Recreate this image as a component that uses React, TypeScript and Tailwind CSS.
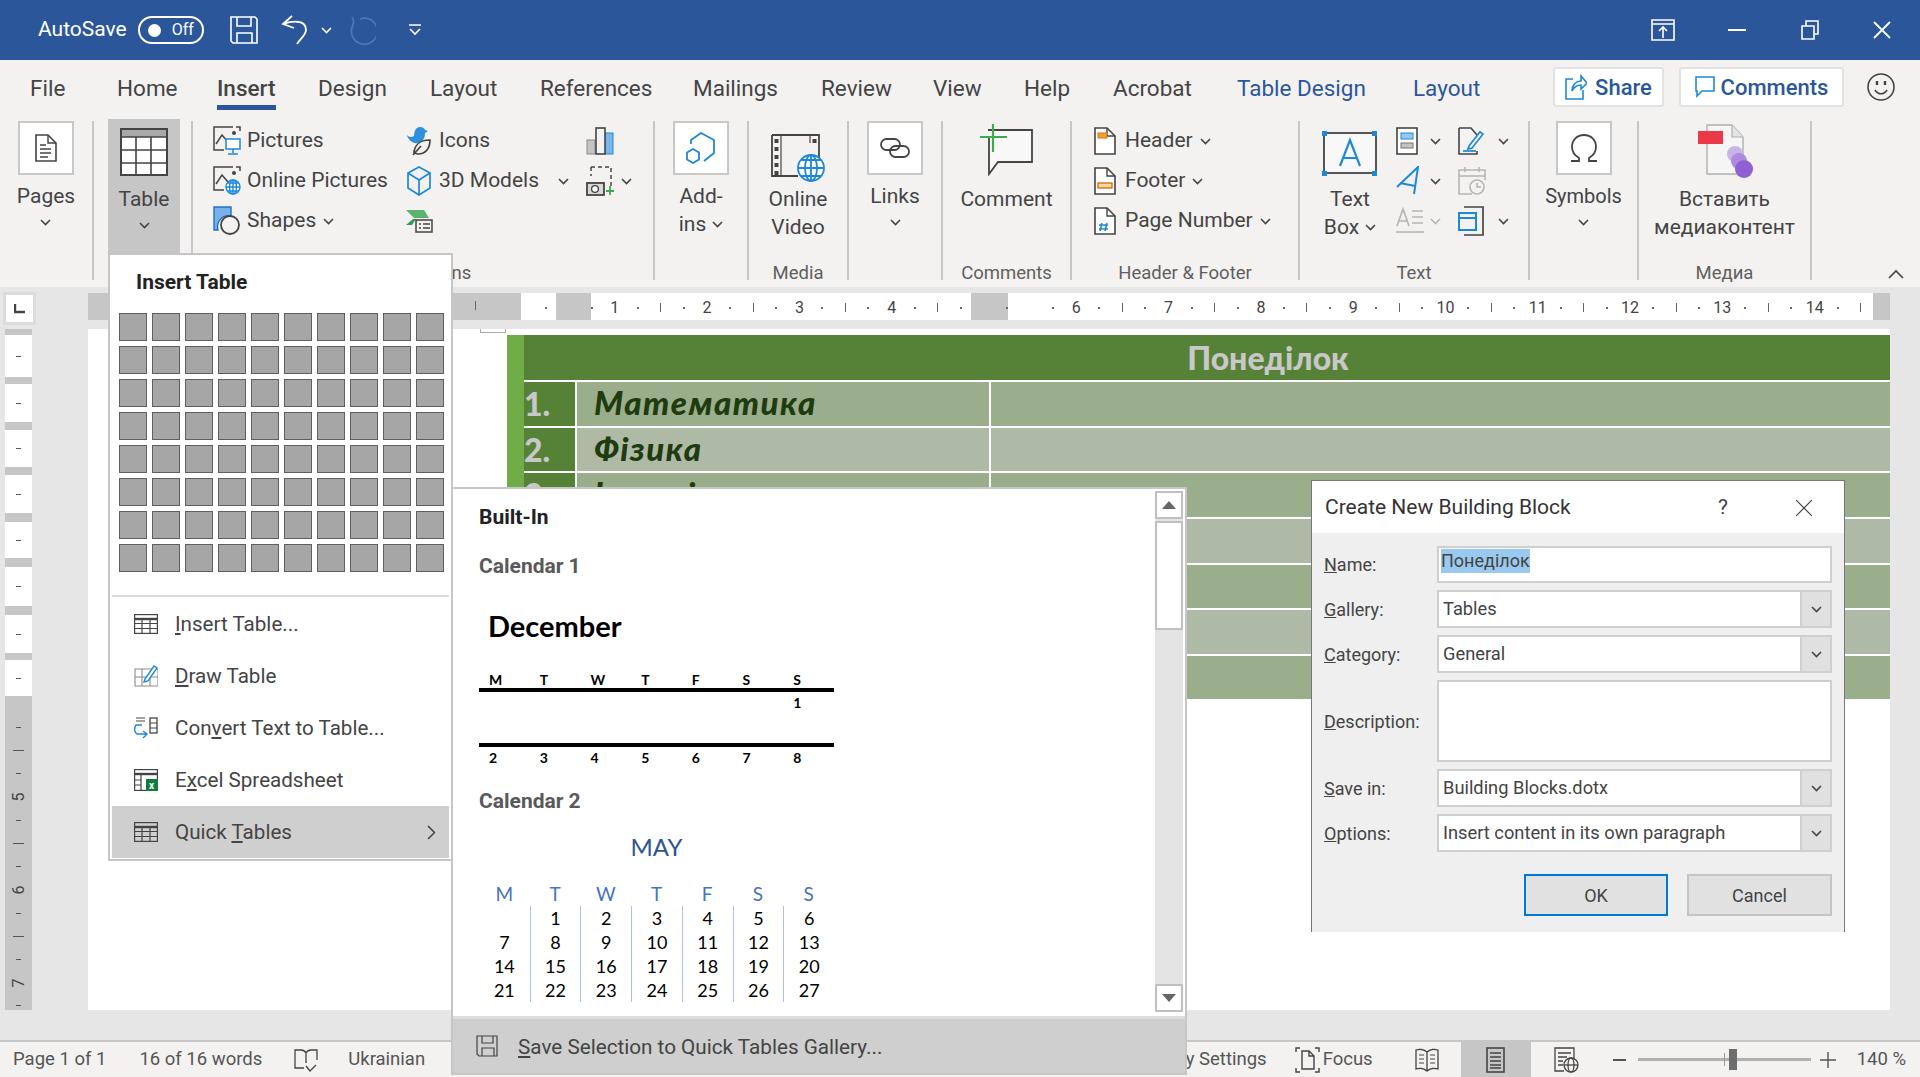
import type { ReactNode } from 'react'

const ink = '#444444'
const blue = '#1e88d8'

function Chev({ className = '' }: { className?: string }) {
  return (
    <svg width="11" height="7" viewBox="0 0 11 7" className={`shrink-0 ${className}`}>
      <path d="M1 1l4.5 4.5L10 1" fill="none" stroke={ink} strokeWidth="1.6" />
    </svg>
  )
}

function SaveIcon() {
  return (
    <svg width="28" height="28" viewBox="0 0 28 28" fill="none" stroke="#fff" strokeWidth="1.6">
      <path d="M1 1h24l2 2v24H3l-2-2z" />
      <path d="M7 1v9h14V1M7 27V17h15v10" />
    </svg>
  )
}

function UndoIcon() {
  return (
    <svg width="28" height="30" viewBox="0 0 28 30" fill="none" stroke="#fff" strokeWidth="1.8">
      <path d="M11 1L2 9l11 4M2 9c6-2 23-6 23 6 0 5-6 9-9 14" />
    </svg>
  )
}

function RedoIcon() {
  return (
    <svg width="30" height="30" viewBox="0 0 30 30" fill="none" stroke="#4f76b0" strokeWidth="1.8">
      <path d="M6 2c2 3 2 5 1 8a13 13 0 1 0 7-6" />
    </svg>
  )
}

function CustomizeIcon() {
  return (
    <svg width="12" height="12" viewBox="0 0 12 12" fill="none" stroke="#fff" strokeWidth="1.6">
      <path d="M0 1h12M1 5l5 5 5-5" />
    </svg>
  )
}

function PresentIcon() {
  return (
    <svg width="24" height="22" viewBox="0 0 24 22" fill="none" stroke="#fff" strokeWidth="1.6">
      <path d="M1 1h22v20H1zM1 5h22M12 19V9M8 12l4-4 4 4" />
    </svg>
  )
}

function RestoreIcon() {
  return (
    <svg width="18" height="20" viewBox="0 0 18 20" fill="none" stroke="#fff" strokeWidth="1.6">
      <path d="M1 6h12v13H1zM5 6V1h12v13h-4" />
    </svg>
  )
}

function DocIcon({ children, w = 22, h = 28 }: { children?: ReactNode; w?: number; h?: number }) {
  return (
    <svg width={w} height={h} viewBox="0 0 22 28" fill="none">
      <path d="M1 1h12l8 8v18H1z" fill="#fff" stroke={ink} strokeWidth="1.6" />
      <path d="M13 1v8h8" stroke={ink} strokeWidth="1.4" />
      {children}
    </svg>
  )
}

function BigTableIcon() {
  return (
    <svg width="48" height="48" viewBox="0 0 48 48">
      <rect x="1" y="1" width="46" height="46" fill="#fff" stroke={ink} strokeWidth="2" />
      <rect x="2" y="2" width="44" height="7" fill="#a9a9a9" />
      <path d="M1 9h46M1 22h46M1 35h46M16 9v38M31 9v38" stroke={ink} strokeWidth="1.6" />
    </svg>
  )
}

function PicturesIcon({ online }: { online?: boolean }) {
  return (
    <svg width="28" height="30" viewBox="0 0 28 30" fill="none">
      <path d="M20 1H1v23h10" stroke={ink} strokeWidth="1.5" />
      <path d="M23 1h4v4" stroke={ink} strokeWidth="1.5" />
      <path d="M3 18l6-9 6 7" stroke={ink} strokeWidth="1.5" />
      <circle cx="21" cy="7" r="2" fill={ink} />
      {online ? (
        <g stroke={blue} strokeWidth="1.4">
          <circle cx="20" cy="21" r="7" fill="#fff" />
          <path d="M13 21h14M20 14v14M15 17h10M15 25h10" />
          <ellipse cx="20" cy="21" rx="3.5" ry="7" />
        </g>
      ) : (
        <g stroke={blue} strokeWidth="1.5">
          <rect x="13" y="13" width="14" height="10" fill="#fff" />
          <path d="M20 23v4M15 28h10" />
        </g>
      )}
    </svg>
  )
}

function ShapesIcon() {
  return (
    <svg width="28" height="30" viewBox="0 0 28 30">
      <path d="M1 1h17v9a11 11 0 0 0-13 14H1z" fill="#7ab2e8" stroke="#1e73c8" strokeWidth="1.4" />
      <circle cx="17" cy="19" r="9" fill="#f3f2f1" stroke={ink} strokeWidth="1.8" />
    </svg>
  )
}

function IconsIcon() {
  return (
    <svg width="26" height="30" viewBox="0 0 26 30" fill="none">
      <path d="M1 9c3 3 5 2 7 1 0-5 2-9 6-9 3 0 4 1 5 3l3 1-3 2c0 6-3 9-7 10-5 1-10-3-11-8z" fill="#2f8fdc" />
      <path d="M8 28c0-8 5-14 16-14 0 8-4 14-12 14-2 0-3-1-4-2zM7 29l8-9" stroke={ink} strokeWidth="1.7" fill="#f3f2f1" />
    </svg>
  )
}

function ModelsIcon() {
  return (
    <svg width="26" height="30" viewBox="0 0 26 30" fill="none" stroke={blue} strokeWidth="1.7">
      <path d="M13 1l11 6v15l-11 7-11-7V7zM2 7l11 7 11-7M13 14v15" />
    </svg>
  )
}

function SmartIcon() {
  return (
    <svg width="28" height="24" viewBox="0 0 28 24">
      <path d="M1 1h18l5 8H9L1 1z" fill="#5bb36d" />
      <path d="M1 16l7-6h3l-4 6z" fill="#2f9e50" />
      <rect x="11" y="11" width="16" height="12" fill="#f3f2f1" stroke={ink} strokeWidth="1.5" />
      <path d="M14 15h2M18 15h7M14 19h2M18 19h7" stroke={ink} strokeWidth="1.4" />
    </svg>
  )
}

function ChartIcon() {
  return (
    <svg width="28" height="28" viewBox="0 0 28 28">
      <rect x="1" y="13" width="8" height="14" fill="#c4c4c4" stroke="#8a8a8a" />
      <rect x="19" y="6" width="8" height="21" fill="#7ab6ec" stroke={blue} />
      <rect x="10" y="1" width="9" height="26" fill="#f3f2f1" stroke={ink} strokeWidth="1.6" />
    </svg>
  )
}

function ScreenshotIcon() {
  return (
    <svg width="28" height="30" viewBox="0 0 28 30" fill="none">
      <path d="M5 1h20v20M5 1v9" stroke={ink} strokeWidth="1.5" strokeDasharray="4 3" />
      <rect x="1" y="17" width="17" height="12" stroke={ink} strokeWidth="1.8" fill="#d9d9d9" />
      <circle cx="9" cy="23" r="3.4" fill="#fff" stroke={ink} strokeWidth="1.4" />
      <path d="M24 20v9M20 25h8" stroke="#3dab4c" strokeWidth="1.8" />
    </svg>
  )
}

function AddinsIcon() {
  return (
    <svg width="30" height="32" viewBox="0 0 30 32" fill="none" stroke={blue} strokeWidth="1.8">
      <path d="M5 12V8l10-7 13 7v13l-10 8" />
      <path d="M7 17l6 3.5v7L7 31l-6-3.5v-7z" />
    </svg>
  )
}

function LinksIcon() {
  return (
    <svg width="30" height="20" viewBox="0 0 30 20" fill="none" stroke={ink} strokeWidth="1.8">
      <rect x="1" y="1" width="19" height="11" rx="5.5" />
      <rect x="10" y="8" width="19" height="11" rx="5.5" />
    </svg>
  )
}

function VideoIcon() {
  return (
    <svg width="54" height="48" viewBox="0 0 54 48" fill="none">
      <path d="M1 1h47v27M1 1v41h26" stroke={ink} strokeWidth="1.8" />
      <path d="M10 1v41M39 1v8" stroke={ink} strokeWidth="1.2" />
      {[5, 13, 21, 29, 37].map((y) => (
        <rect key={y} x="3.5" y={y} width="4" height="4" fill={ink} />
      ))}
      <rect x="41.5" y="5" width="4" height="4" fill={ink} />
      <g stroke={blue} strokeWidth="1.8">
        <circle cx="40" cy="34" r="13" fill="#fff" />
        <ellipse cx="40" cy="34" rx="6" ry="13" />
        <path d="M27 34h26M40 21v26M30 26h20M30 42h20" />
      </g>
    </svg>
  )
}

function CommentIcon() {
  return (
    <svg width="54" height="52" viewBox="0 0 54 52" fill="none">
      <path d="M8 6h44v32H18l-9 12v-12h0V14" fill="#f8f8f8" stroke={ink} strokeWidth="1.8" />
      <path d="M13 0v28M0 13h27" stroke="#3dab4c" strokeWidth="2.2" />
    </svg>
  )
}

function TextBoxIcon() {
  return (
    <svg width="56" height="46" viewBox="0 0 56 46">
      <rect x="2" y="3" width="52" height="40" fill="#f8f8f8" stroke={ink} strokeWidth="1.8" />
      <path d="M18 36l10-26 10 26M21 28h14" fill="none" stroke={blue} strokeWidth="2.2" />
      {[[0, 1], [50, 1], [0, 41], [50, 41]].map(([x, y]) => (
        <rect key={`${x}-${y}`} x={x} y={y} width="5" height="5" fill={blue} />
      ))}
    </svg>
  )
}

function QuickPartsIcon() {
  return (
    <svg width="22" height="28" viewBox="0 0 22 28" fill="none">
      <rect x="1" y="1" width="20" height="26" fill="#fff" stroke={ink} strokeWidth="1.6" />
      <rect x="5" y="6" width="12" height="6" fill="#9cc7ec" stroke={blue} />
      <rect x="5" y="16" width="12" height="5" fill="#c4c4c4" stroke="#777" />
    </svg>
  )
}

function WordArtIcon() {
  return (
    <svg width="24" height="30" viewBox="0 0 24 30" fill="none" stroke={blue} strokeWidth="2">
      <path d="M1 21L22 1l-4 27M4 17l15 3" />
    </svg>
  )
}

function DropCapIcon() {
  return (
    <svg width="28" height="28" viewBox="0 0 28 28" fill="none" stroke="#b5b5b5" strokeWidth="1.7">
      <path d="M1 19l6-17 6 17M3 14h8M16 4h11M16 10h11M16 16h11M0 25h28" />
    </svg>
  )
}

function SignatureIcon() {
  return (
    <svg width="26" height="28" viewBox="0 0 26 28" fill="none">
      <path d="M1 1h12l6 7v6M1 1v26h18v-3" stroke={ink} strokeWidth="1.6" />
      <path d="M11 19l11-14 3 2-11 14-4 1z" fill="#fff" stroke={blue} strokeWidth="1.7" />
      <path d="M5 24h13" stroke={blue} strokeWidth="1.7" />
    </svg>
  )
}

function DateIcon() {
  return (
    <svg width="28" height="30" viewBox="0 0 28 30" fill="none" stroke="#b5b5b5" strokeWidth="1.6">
      <path d="M14 28H1V4h26v10M1 10h26M7 1v5M21 1v5" />
      <circle cx="19" cy="21" r="7" fill="#f3f2f1" />
      <path d="M19 17v4h4" />
    </svg>
  )
}

function ObjectIcon() {
  return (
    <svg width="26" height="30" viewBox="0 0 26 30" fill="none">
      <path d="M6 1h19v28H6" stroke={ink} strokeWidth="1.7" />
      <rect x="1" y="7" width="17" height="17" fill="#f3f2f1" stroke={blue} strokeWidth="2" />
      <path d="M1 12h17" stroke={blue} strokeWidth="2" />
    </svg>
  )
}

function OmegaIcon() {
  return (
    <svg width="28" height="28" viewBox="0 0 28 28" fill="none" stroke={ink} strokeWidth="1.8">
      <path d="M1 27h8v-3C4 21 2 17 2 13 2 6 7 1 14 1s12 5 12 12c0 4-2 8-7 11v3h8" />
    </svg>
  )
}

function MediaIcon() {
  return (
    <svg width="58" height="54" viewBox="0 0 58 54">
      <path d="M9 1h25l11 12v37H9z" fill="#f5f5f5" stroke="#b0b0b0" strokeWidth="1.4" />
      <path d="M34 1v12h11" fill="#e4e4e4" stroke="#b0b0b0" strokeWidth="1.2" />
      <rect x="0" y="7" width="25" height="13" fill="#ea3a48" />
      <circle cx="37" cy="30" r="8" fill="#c8b4e6" />
      <circle cx="41" cy="37" r="8" fill="#ad8ae0" />
      <circle cx="46" cy="45" r="9" fill="#8f5fd6" />
    </svg>
  )
}

function GridIcon() {
  return (
    <svg width="24" height="20" viewBox="0 0 24 20" fill="none" stroke={ink} strokeWidth="1.2">
      <rect x="0.6" y="0.6" width="22.8" height="18.8" />
      <path d="M0 5h24" strokeWidth="2.4" />
      <path d="M0 9.5h24M0 14.5h24M8 5v15M16 5v15" />
    </svg>
  )
}

function DrawTableIcon() {
  return (
    <svg width="24" height="22" viewBox="0 0 24 22" fill="none" stroke="#8a8a8a" strokeWidth="1.1">
      <path d="M1 4h23v17H1zM1 12h23M8 4v17M16 12v9" />
      <path d="M11 14l9-13 3 2-9 13-4 1z" fill="#fff" stroke={blue} strokeWidth="1.4" />
    </svg>
  )
}

function ConvertIcon() {
  return (
    <svg width="24" height="24" viewBox="0 0 24 24" fill="none">
      <path d="M2 2h9M2 5h9" stroke={ink} strokeWidth="1.2" />
      <rect x="16" y="2" width="7" height="15" stroke={ink} strokeWidth="1.3" />
      <path d="M16 7h7M16 12h7" stroke={ink} strokeWidth="1.1" />
      <path d="M8 9H2C0 12 0 16 3 18h10M9 15l4 3-4 4" stroke={blue} strokeWidth="1.4" />
    </svg>
  )
}

function ExcelIcon() {
  return (
    <svg width="24" height="22" viewBox="0 0 24 22">
      <g fill="none" stroke={ink} strokeWidth="1.2">
        <rect x="0.6" y="0.6" width="22.8" height="20.8" />
        <path d="M0 5h24" strokeWidth="2.4" />
        <path d="M7 5v17M0 11h7M0 16h7" />
      </g>
      <rect x="12" y="10" width="12" height="12" fill="#107c41" />
      <text x="15" y="20" fontSize="10" fontWeight="700" fill="#fff" fontFamily="Roboto, sans-serif">x</text>
    </svg>
  )
}

function FloppyIcon() {
  return (
    <svg width="23" height="22" viewBox="0 0 23 22" fill="none" stroke={ink} strokeWidth="1.2">
      <path d="M1 1h20v20H3l-2-2z" />
      <path d="M6 1v7h11V1M6 21v-8h12v8" />
    </svg>
  )
}

function BookCheckIcon() {
  return (
    <svg width="24" height="24" viewBox="0 0 24 24" fill="none" stroke={ink} strokeWidth="1.3">
      <path d="M10 20H1V2h6c2 0 4 1 5 3 1-2 3-3 5-3h6v10M12 5v10" />
      <path d="M12 18l4 5 6-6" />
    </svg>
  )
}

function FocusIcon() {
  return (
    <svg width="25" height="26" viewBox="0 0 25 26" fill="none" stroke={ink} strokeWidth="1.4">
      <path d="M1 5V1h4M20 1h4v4M1 21v4h4M24 21v4h-4" />
      <path d="M7 4h7l5 5v13H7zM14 4v5h5" />
    </svg>
  )
}

function ReadIcon() {
  return (
    <svg width="24" height="24" viewBox="0 0 24 24" fill="none" stroke={ink} strokeWidth="1.3">
      <path d="M12 4C9 1 4 1 1 2v19c3-1 8-1 11 2 3-3 8-3 11-2V2c-3-1-8-1-11 2zM12 4v19" />
      <path d="M4 7h5M4 11h5M4 15h5M15 7h5M15 11h5M15 15h5" strokeWidth="1.2" />
    </svg>
  )
}

function PrintIcon() {
  return (
    <svg width="19" height="26" viewBox="0 0 19 26" fill="none" stroke={ink}>
      <rect x="1" y="1" width="17" height="24" strokeWidth="1.6" />
      <path d="M4 6h11M4 10h11M4 14h11M4 18h11M4 21h11" strokeWidth="1.4" />
    </svg>
  )
}

function WebIcon() {
  return (
    <svg width="25" height="26" viewBox="0 0 25 26" fill="none" stroke={ink} strokeWidth="1.3">
      <path d="M10 24H1V1h19v10M4 6h13M4 10h9M4 14h5M4 18h5" />
      <circle cx="17" cy="18" r="7" fill="#f3f2f1" />
      <ellipse cx="17" cy="18" rx="3" ry="7" />
      <path d="M10 18h14" />
    </svg>
  )
}

function BoxIcon({ children }: { children: ReactNode }) {
  return (
    <div className="flex h-[54px] w-[56px] items-center justify-center border-2 border-[#c8c8c8] bg-white">
      {children}
    </div>
  )
}

function Group({ className, label, children }: { className: string; label?: string; children?: ReactNode }) {
  return (
    <div className={`mt-[2px] flex h-[159px] shrink-0 flex-col border-r-2 border-[#c6c6c6] ${className}`}>
      <div className="flex min-h-0 flex-1">{children}</div>
      {label && <div className="-mb-[4px] h-[22px] text-center text-[18.5px] leading-[22px] text-[#5f5f5f]">{label}</div>}
    </div>
  )
}

function BoxButton({ icon, lines, chevInline, small }: { icon: ReactNode; lines: string[]; chevInline?: boolean; small?: boolean }) {
  return (
    <div className="flex w-full flex-col items-center">
      <BoxIcon>{icon}</BoxIcon>
      <div className={`mt-[7px] flex flex-col items-center leading-[28px] ${small ? 'text-[20px]' : 'text-[21px]'}`}>
        {lines.map((l, i) => (
          <div key={l} className="flex items-center gap-[6px]">
            {l}
            {chevInline && i === lines.length - 1 && <Chev />}
          </div>
        ))}
        {!chevInline && <Chev className="mt-[9px]" />}
      </div>
    </div>
  )
}

function TallButton({ icon, lines, chev }: { icon: ReactNode; lines: string[]; chev?: boolean }) {
  return (
    <div className="flex flex-col items-center">
      <div className="flex h-[64px] items-start justify-center pt-[3px]">{icon}</div>
      <div className="flex flex-col items-center text-[21px] leading-[28px]">
        {lines.map((l, i) => (
          <div key={l} className="flex items-center gap-[6px] whitespace-nowrap">
            {l}
            {chev && i === lines.length - 1 && <Chev />}
          </div>
        ))}
      </div>
    </div>
  )
}

function SmallRow({ icon, text, chev }: { icon: ReactNode; text?: string; chev?: boolean }) {
  return (
    <div className="flex h-[40px] items-center whitespace-nowrap text-[21px]">
      <div className="flex w-[28px] shrink-0 justify-center">{icon}</div>
      {text && <span className="ml-[6px]">{text}</span>}
      {chev && <Chev className="ml-[7px]" />}
    </div>
  )
}

const tabs = [
  { t: 'File', c: 'w-[87px]' },
  { t: 'Home', c: 'w-[100px]' },
  { t: 'Insert', c: 'w-[101px] font-medium' },
  { t: 'Design', c: 'w-[112px]' },
  { t: 'Layout', c: 'w-[110px]' },
  { t: 'References', c: 'w-[153px]' },
  { t: 'Mailings', c: 'w-[128px]' },
  { t: 'Review', c: 'w-[112px]' },
  { t: 'View', c: 'w-[91px]' },
  { t: 'Help', c: 'w-[89px]' },
  { t: 'Acrobat', c: 'w-[124px]' },
  { t: 'Table Design', c: 'w-[176px] text-[#2b579a]' },
  { t: 'Layout', c: 'w-[90px] text-[#2b579a]' },
]

function TitleBar() {
  return (
    <div className="flex h-[60px] shrink-0 items-center bg-[#2b579a] text-white">
      <span className="ml-[38px] text-[21px]">AutoSave</span>
      <div className="ml-[11px] flex h-[28px] w-[66px] items-center rounded-full border-2 border-white pl-[8px]">
        <div className="h-[13px] w-[13px] rounded-full bg-white" />
        <span className="ml-[11px] text-[16px]">Off</span>
      </div>
      <div className="ml-[26px] flex"><SaveIcon /></div>
      <div className="ml-[23px] flex"><UndoIcon /></div>
      <Chev className="ml-[12px] [&_path]:stroke-white" />
      <div className="ml-[14px] flex"><RedoIcon /></div>
      <div className="ml-[33px] flex"><CustomizeIcon /></div>
      <div className="ml-auto flex items-center">
        <PresentIcon />
        <div className="ml-[53px] h-[2px] w-[18px] bg-white" />
        <div className="ml-[55px] flex"><RestoreIcon /></div>
        <svg className="ml-[54px] mr-[29px]" width="18" height="18" viewBox="0 0 18 18" stroke="#fff" strokeWidth="1.8">
          <path d="M1 1l16 16M17 1L1 17" />
        </svg>
      </div>
    </div>
  )
}

function TabRow() {
  return (
    <div className="flex h-[59px] shrink-0 items-start bg-[#f3f2f1] pl-[30px] text-[22.5px] leading-[30px] text-[#444]">
      <div className="flex pt-[13px]">
        {tabs.map((x, i) => (
          <div key={i} className={x.c}>
            <span className={x.t === 'Insert' ? 'inline-block border-b-[5px] border-[#2b579a] pb-[2px]' : ''}>{x.t}</span>
          </div>
        ))}
      </div>
      <div className="ml-auto flex items-center pt-[7px]">
        <div className="flex h-[40px] w-[111px] items-center justify-center gap-[8px] rounded-[3px] border-2 border-[#e2e2e2] bg-white text-[22px] font-medium text-[#2b579a]">
          <svg width="22" height="26" viewBox="0 0 22 26" fill="none" stroke={blue} strokeWidth="1.6">
            <path d="M8 5H1v20h17v-9M7 17c0-6 4-10 9-10V2l6 7-6 6v-4c-4 0-7 2-9 6z" />
          </svg>
          <span className="pt-[2px]">Share</span>
        </div>
        <div className="ml-[15px] flex h-[40px] w-[165px] items-center justify-center gap-[6px] rounded-[3px] border-2 border-[#e2e2e2] bg-white text-[22px] font-medium text-[#2b579a]">
          <svg width="20" height="22" viewBox="0 0 20 22" fill="none" stroke={blue} strokeWidth="1.6">
            <path d="M1 1h18v14H7l-5 5v-5H1z" />
          </svg>
          <span className="pt-[2px]">Comments</span>
        </div>
        <svg className="ml-[23px] mr-[25px]" width="28" height="28" viewBox="0 0 28 28" fill="none" stroke={ink} strokeWidth="1.6">
          <circle cx="14" cy="14" r="13" />
          <path d="M8 17c3 5 9 5 12 0" />
          <path d="M10 8v4M18 8v4" strokeWidth="2.4" />
        </svg>
      </div>
    </div>
  )
}

function Ribbon() {
  return (
    <div className="flex h-[168px] shrink-0 items-start bg-[#f3f2f1] text-[#444]">
      <Group className="w-[94px]">
        <BoxButton icon={<DocIcon><path d="M5 11h6M5 15h11M5 19h11M5 23h8" stroke={ink} strokeWidth="1.3" /></DocIcon>} lines={['Pages']} />
      </Group>
      <Group className="w-[99px]">
        <div className="ml-[14px] -mt-[2px] flex h-[134px] w-[72px] flex-col items-center bg-[#c6c6c6] pt-[9px]">
          <BigTableIcon />
          <span className="mt-[9px] text-[21px] leading-[28px]">Table</span>
          <Chev className="mt-[9px]" />
        </div>
      </Group>
      <Group className="w-[462px]" label="Illustrations">
        <div className="w-[192px] pl-[20px]">
          <SmallRow icon={<PicturesIcon />} text="Pictures" />
          <SmallRow icon={<PicturesIcon online />} text="Online Pictures" />
          <SmallRow icon={<ShapesIcon />} text="Shapes" chev />
        </div>
        <div className="w-[180px] pl-[20px]">
          <SmallRow icon={<IconsIcon />} text="Icons" />
          <div className="flex items-center">
            <SmallRow icon={<ModelsIcon />} text="3D Models" />
            <Chev className="ml-[19px]" />
          </div>
          <SmallRow icon={<SmartIcon />} />
        </div>
        <div className="pl-[21px]">
          <SmallRow icon={<ChartIcon />} />
          <SmallRow icon={<ScreenshotIcon />} chev />
        </div>
      </Group>
      <Group className="w-[94px]">
        <BoxButton icon={<AddinsIcon />} lines={['Add-', 'ins']} chevInline />
      </Group>
      <Group className="w-[100px]" label="Media">
        <div className="flex w-full justify-center">
          <TallButton icon={<div className="pt-[10px]"><VideoIcon /></div>} lines={['Online', 'Video']} />
        </div>
      </Group>
      <Group className="w-[94px]">
        <BoxButton icon={<LinksIcon />} lines={['Links']} />
      </Group>
      <Group className="w-[129px]" label="Comments">
        <div className="flex w-full justify-center">
          <TallButton icon={<CommentIcon />} lines={['Comment']} />
        </div>
      </Group>
      <Group className="w-[228px]" label="Header & Footer">
        <div className="pl-[19px]">
          <SmallRow icon={<DocIcon><rect x="4" y="6" width="9" height="5" fill="#f0a030" stroke="#d8730a" /></DocIcon>} text="Header" chev />
          <SmallRow icon={<DocIcon><rect x="4" y="16" width="14" height="5" fill="#f8d9a8" stroke="#d8730a" strokeWidth="1.4" /></DocIcon>} text="Footer" chev />
          <SmallRow icon={<DocIcon><path d="M8 16l-2 8M13 16l-2 8M5 18h9M5 22h9" stroke={blue} strokeWidth="1.6" /></DocIcon>} text="Page Number" chev />
        </div>
      </Group>
      <Group className="w-[230px]" label="Text">
        <div className="flex w-[96px] justify-center pl-[4px]">
          <TallButton icon={<div className="pt-[6px]"><TextBoxIcon /></div>} lines={['Text', 'Box']} chev />
        </div>
        <div className="w-[62px]">
          <div className="flex h-[40px] items-center gap-[12px]"><QuickPartsIcon /><Chev /></div>
          <div className="flex h-[40px] items-center gap-[10px]"><WordArtIcon /><Chev /></div>
          <div className="flex h-[40px] items-center gap-[6px]"><DropCapIcon /><Chev className="[&_path]:stroke-[#b5b5b5]" /></div>
        </div>
        <div className="w-[70px]">
          <div className="flex h-[40px] items-center gap-[14px]"><SignatureIcon /><Chev /></div>
          <div className="flex h-[40px] items-center"><DateIcon /></div>
          <div className="flex h-[40px] items-center gap-[14px]"><ObjectIcon /><Chev /></div>
        </div>
      </Group>
      <Group className="w-[109px]">
        <BoxButton icon={<OmegaIcon />} lines={['Symbols']} small />
      </Group>
      <Group className="w-[173px]" label="Медиа">
        <div className="flex w-full justify-center">
          <TallButton icon={<div className="pl-[4px]"><MediaIcon /></div>} lines={['Вставить', 'медиаконтент']} />
        </div>
      </Group>
      <div className="mt-[150px] flex flex-1 justify-end pr-[16px]">
        <svg width="16" height="10" viewBox="0 0 16 10" fill="none" stroke={ink} strokeWidth="1.6">
          <path d="M1 9l7-7 7 7" />
        </svg>
      </div>
    </div>
  )
}

const rulerUnits = Array.from({ length: 16 }, (_, i) => i)

function RulerRow() {
  return (
    <div className="relative flex h-[42px] shrink-0 items-start bg-[#e6e6e6] pt-[5px]">
      <div className="ml-[3px] flex h-[33px] w-[33px] items-center justify-center border-[3px] border-[#dcdcdc] bg-white">
        <svg width="12" height="10" viewBox="0 0 12 10">
          <path d="M1 0v8h10" fill="none" stroke="#444" strokeWidth="2.4" />
        </svg>
      </div>
      <div className="ml-[52px] mt-[1px] flex h-[27px]">
        <div className="w-[433px] bg-[#c6c6c6]" />
        <div className="w-[35px] bg-white" />
        <div className="w-[35px] bg-[#c6c6c6]" />
        <div className="w-[380px] bg-white" />
        <div className="w-[37px] bg-[#c6c6c6]" />
        <div className="w-[865px] bg-white" />
        <div className="w-[17px] bg-[#c6c6c6]" />
      </div>
      <div className="absolute left-[475px] top-[14px] h-[9px] w-px bg-[#666]" />
      <div className="absolute left-[511px] top-[6px] flex h-[27px] w-[1362px] overflow-hidden pt-[2px] text-[16px] text-[#444]">
        {rulerUnits.map((n) => (
          <div key={n} className="flex w-[92.3px] shrink-0 items-center">
            <span className="flex w-[23px] justify-center">{n === 0 || n === 5 ? '' : n}</span>
            <span className="flex w-[23px] justify-center"><i className="block h-[2px] w-[2px] bg-[#666]" /></span>
            <span className="flex w-[23px] justify-center">{n !== 0 && n !== 5 && <i className="block h-[9px] w-px bg-[#666]" />}</span>
            <span className="flex w-[23px] justify-center"><i className="block h-[2px] w-[2px] bg-[#666]" /></span>
          </div>
        ))}
      </div>
    </div>
  )
}

const whiteSegs = [
  'h-[42px] mt-[6px]',
  'h-[38px] mt-[7px]',
  'h-[37px] mt-[8px]',
  'h-[38px] mt-[8px]',
  'h-[36px] mt-[9px]',
  'h-[39px] mt-[9px]',
  'h-[38px] mt-[9px]',
  'h-[36px] mt-[7px]',
]

const lowerTicks = ['s', 'l', 's', '5', 's', 'l', 's', '6', 's', 'l', 's', '7', 's']

function VerticalRuler() {
  return (
    <div className="ml-[5px] flex h-[681px] w-[27px] flex-col overflow-hidden bg-[#c6c6c6]">
      {whiteSegs.map((c) => (
        <div key={c} className={`flex shrink-0 items-center justify-center bg-white ${c}`}>
          <i className="block h-px w-[5px] bg-[#555]" />
        </div>
      ))}
      <div className="flex flex-col pt-[20px] text-[16px] text-[#444]">
        {lowerTicks.map((t, i) => (
          <div key={i} className="flex h-[23.2px] shrink-0 items-center justify-center">
            {t === 's' && <i className="block h-px w-[5px] bg-[#555]" />}
            {t === 'l' && <i className="block h-px w-[11px] bg-[#555]" />}
            {t !== 's' && t !== 'l' && <span className="-rotate-90">{t}</span>}
          </div>
        ))}
      </div>
    </div>
  )
}

const lessons = ['Математика', 'Фізика', 'Історія', '', '', '', '']
const rowHeights = ['h-[46px]', 'h-[45px]', 'h-[46px]', 'h-[46px]', 'h-[45px]', 'h-[46px]', 'h-[45px]']

function DocTable() {
  return (
    <div className="relative flex w-[1383px] bg-[#70ad47]">
      <div className="absolute -top-[6px] left-[-27px] h-[4px] w-[26px] border-x border-b border-[#aaa] bg-white" />
      <div className="w-[17px] shrink-0" />
      <div className="flex flex-1 flex-col [font-family:Lato,sans-serif]">
        <div className="flex h-[45px] items-center justify-center bg-[#568237] pl-[122px] text-[32px] font-black text-[#c8c8c8]">
          Понеділок
        </div>
        {lessons.map((name, i) => (
          <div key={i} className={`flex border-t-2 border-white ${rowHeights[i]} ${i % 2 === 0 ? 'bg-[#9aae8b]' : 'bg-[#aebaa6]'}`}>
            <div className="flex w-[51px] items-center bg-[#568237] text-[32px] font-black text-[#c8c8c8]">
              {i + 1}.
            </div>
            <div className="flex w-[416px] items-center border-x-2 border-white pb-[2px] pl-[17px] text-[33px] font-black italic tracking-[1.5px] text-[#1f3b10]">
              {name}
            </div>
          </div>
        ))}
      </div>
    </div>
  )
}

function StatusBar() {
  return (
    <div className="flex h-[37px] shrink-0 items-center border-t-2 border-[#c6c6c6] bg-[#f3f2f1] text-[18.5px] text-[#555]">
      <span className="ml-[13px]">Page 1 of 1</span>
      <span className="ml-[33px]">16 of 16 words</span>
      <div className="ml-[32px] flex"><BookCheckIcon /></div>
      <span className="ml-[30px]">Ukrainian</span>
      <div className="ml-auto flex h-full items-center">
        <span>Display Settings</span>
        <div className="ml-[28px] flex"><FocusIcon /></div>
        <span className="ml-[3px]">Focus</span>
        <div className="ml-[42px] flex"><ReadIcon /></div>
        <div className="ml-[22px] flex h-full w-[70px] items-center justify-center bg-[#c6c6c6]"><PrintIcon /></div>
        <div className="ml-[23px] flex"><WebIcon /></div>
        <div className="ml-[34px] h-[2px] w-[13px] bg-[#555]" />
        <div className="relative ml-[12px] h-[3px] w-[173px] bg-[#b0b0b0]">
          <div className="absolute -top-[5px] left-[86px] h-[13px] w-px bg-[#999]" />
          <div className="absolute -top-[9px] left-[91px] h-[21px] w-[8px] bg-[#6e6e6e]" />
        </div>
        <svg className="ml-[9px]" width="16" height="16" viewBox="0 0 16 16" stroke="#555" strokeWidth="1.4">
          <path d="M0 8h16M8 0v16" />
        </svg>
        <span className="ml-[21px] mr-[14px]">140 %</span>
      </div>
    </div>
  )
}

const menuItems = [
  { icon: <GridIcon />, text: <><u>I</u>nsert Table...</> },
  { icon: <DrawTableIcon />, text: <><u>D</u>raw Table</> },
  { icon: <ConvertIcon />, text: <>Con<u>v</u>ert Text to Table...</> },
  { icon: <ExcelIcon />, text: <>E<u>x</u>cel Spreadsheet</> },
]

function InsertTableMenu() {
  const cells = Array.from({ length: 80 }, (_, i) => i)
  return (
    <div className="absolute left-[108px] top-[253px] z-10 h-[608px] w-[345px] border-2 border-[#c6c6c6] bg-white text-[#444]">
      <div className="pl-[26px] pt-[13px] text-[21px] font-bold leading-[28px] text-[#222]">Insert Table</div>
      <div className="ml-[9px] mt-[17px] grid w-[325px] grid-cols-[repeat(10,28px)] gap-[5px]">
        {cells.map((c) => (
          <div key={c} className="h-[28px] border border-[#5f5f5f] bg-[#a6a6a6]" />
        ))}
      </div>
      <div className="mx-[2px] mt-[23px] h-[2px] bg-[#d9d9d9]" />
      <div className="mx-[2px] mt-[1px] flex flex-col text-[20.6px]">
        {menuItems.map((m, i) => (
          <div key={i} className="flex h-[52px] items-center pl-[22px]">
            <div className="flex w-[24px] justify-center">{m.icon}</div>
            <span className="ml-[17px]">{m.text}</span>
          </div>
        ))}
        <div className="flex h-[52px] items-center bg-[#cfcfcf] pl-[22px]">
          <div className="flex w-[24px] justify-center"><GridIcon /></div>
          <span className="ml-[17px]">Quick <u>T</u>ables</span>
          <svg className="ml-auto mr-[13px]" width="9" height="15" viewBox="0 0 9 15" fill="none" stroke={ink} strokeWidth="1.5">
            <path d="M1 1l6.5 6.5L1 14" />
          </svg>
        </div>
      </div>
    </div>
  )
}

const weekDays = ['M', 'T', 'W', 'T', 'F', 'S', 'S']
const mayRows = [
  ['', '1', '2', '3', '4', '5', '6'],
  ['7', '8', '9', '10', '11', '12', '13'],
  ['14', '15', '16', '17', '18', '19', '20'],
  ['21', '22', '23', '24', '25', '26', '27'],
]

function Gallery() {
  return (
    <div className="absolute left-[451px] top-[487px] z-20 flex h-[588px] w-[736px] flex-col border-2 border-[#c6c6c6] bg-white">
      <div className="flex h-[527px] shrink-0">
        <div className="flex-1 pl-[26px] pt-[14px] [font-family:Lato,sans-serif]">
          <div className="text-[21px] font-bold leading-[28px] text-[#222] [font-family:Roboto,sans-serif]">Built-In</div>
          <div className="mt-[21px] text-[21px] font-bold leading-[28px] text-[#595959] [font-family:Roboto,sans-serif]">Calendar 1</div>
          <div className="ml-[9px] mt-[28px] text-[29px] font-bold leading-[36px] text-black">December</div>
          <div className="mt-[28px] grid w-[355px] grid-cols-7 text-[14px] font-bold leading-[16px] text-black">
            {weekDays.map((d, i) => (
              <span key={i} className="pl-[10px]">{d}</span>
            ))}
          </div>
          <div className="h-[4px] w-[355px] bg-black" />
          <div className="mt-[2px] grid w-[355px] grid-cols-7 text-[14px] font-bold leading-[18px] text-black">
            <span className="col-start-7 pl-[10px]">1</span>
          </div>
          <div className="mt-[31px] h-[4px] w-[355px] bg-black" />
          <div className="mt-[2px] grid w-[355px] grid-cols-7 text-[14px] font-bold leading-[18px] text-black">
            {['2', '3', '4', '5', '6', '7', '8'].map((d) => (
              <span key={d} className="pl-[10px]">{d}</span>
            ))}
          </div>
          <div className="mt-[20px] text-[21px] font-bold leading-[28px] text-[#595959] [font-family:Roboto,sans-serif]">Calendar 2</div>
          <div className="mt-[16px] w-[355px] text-center text-[24px] leading-[32px] text-[#2f5496]">MAY</div>
          <div className="mt-[19px] grid w-[355px] grid-cols-7 text-center text-[19px] leading-[24px] text-[#4472c4]">
            {weekDays.map((d, i) => (
              <span key={i}>{d}</span>
            ))}
          </div>
          <div className="grid w-[355px] grid-cols-7 text-center text-[18px] leading-[24px] text-black">
            {mayRows.flat().map((d, i) => (
              <span key={i} className={i % 7 === 0 ? '' : 'border-l border-[#a9c1e8]'}>
                {d}
              </span>
            ))}
          </div>
        </div>
        <div className="mr-[2px] mt-[2px] flex h-[521px] w-[28px] flex-col bg-[#e4e4e4]">
          <div className="flex h-[28px] items-center justify-center border-2 border-[#c0c0c0] bg-white">
            <svg width="14" height="8" viewBox="0 0 14 8"><path d="M7 0l7 8H0z" fill="#666" /></svg>
          </div>
          <div className="mt-[2px] h-[109px] border-2 border-[#c0c0c0] bg-white" />
          <div className="mt-auto flex h-[28px] items-center justify-center border-2 border-[#c0c0c0] bg-white">
            <svg width="14" height="8" viewBox="0 0 14 8"><path d="M7 8L0 0h14z" fill="#666" /></svg>
          </div>
        </div>
      </div>
      <div className="h-[3px] shrink-0 bg-[#dedede]" />
      <div className="flex flex-1 items-center bg-[#cfcfcf] pl-[23px] text-[20.7px] text-[#444]">
        <FloppyIcon />
        <span className="ml-[19px] pt-[3px]"><u>S</u>ave Selection to Quick Tables Gallery...</span>
      </div>
    </div>
  )
}

function Field({ label, value, h = 'h-[38px]', select }: { label: ReactNode; value?: string; h?: string; select?: boolean }) {
  return (
    <div className="flex items-center">
      <div className="w-[125px] pl-[12px] text-[18px] text-[#444]">{label}</div>
      <div className={`flex w-[395px] items-center border-2 border-[#cfcfcf] bg-white pl-[4px] text-[18.3px] text-[#444] ${h}`}>
        {value}
        {select && (
          <div className="ml-auto flex h-full w-[30px] items-center justify-center border-l-2 border-[#d0d0d0] bg-[#e0e0e0]">
            <Chev />
          </div>
        )}
      </div>
    </div>
  )
}

function BuildingBlockDialog() {
  return (
    <div className="absolute left-[1311px] top-[480px] z-30 flex h-[452px] w-[534px] flex-col border-x border-t border-[#777] bg-[#efefef]">
      <div className="flex h-[52px] shrink-0 items-center bg-white pl-[13px] pt-[2px] text-[21px] text-[#333]">
        Create New Building Block
        <span className="ml-auto text-[21px] text-[#444]">?</span>
        <svg className="ml-[68px] mr-[32px]" width="16" height="16" viewBox="0 0 16 16" stroke="#444" strokeWidth="1.2">
          <path d="M0 0l16 16M16 0L0 16" />
        </svg>
      </div>
      <div className="flex flex-col gap-[7px] pt-[13px]">
        <div className="flex items-center">
          <div className="w-[125px] pl-[12px] text-[18px] text-[#444]"><u>N</u>ame:</div>
          <div className="flex h-[37px] w-[395px] items-start border-2 border-[#cfcfcf] bg-white pl-[2px] text-[18px] text-[#444]">
            <span className="mt-[1px] bg-[#99c9ef] leading-[24px]">Понеділок</span>
          </div>
        </div>
        <Field label={<><u>G</u>allery:</>} value="Tables" select />
        <Field label={<><u>C</u>ategory:</>} value="General" select />
        <Field label={<><u>D</u>escription:</>} h="h-[82px]" />
        <Field label={<><u>S</u>ave in:</>} value="Building Blocks.dotx" select />
        <Field label={<><u>O</u>ptions:</>} value="Insert content in its own paragraph" select />
      </div>
      <div className="ml-[212px] mt-[22px] flex gap-[19px] text-[18px] text-[#444]">
        <div className="flex h-[42px] w-[144px] items-center justify-center border-2 border-[#0078d7] bg-[#e1e1e1]">OK</div>
        <div className="flex h-[42px] w-[145px] items-center justify-center border-2 border-[#c4c4c4] bg-[#e1e1e1]">Cancel</div>
      </div>
    </div>
  )
}

export default function App() {
  return (
    <div className="relative flex h-[1077px] w-[1920px] flex-col overflow-hidden bg-[#e6e6e6] [font-family:Roboto,sans-serif]">
      <TitleBar />
      <TabRow />
      <Ribbon />
      <RulerRow />
      <div className="flex flex-1 items-start">
        <div className="w-[88px] shrink-0">
          <VerticalRuler />
        </div>
        <div className="h-[681px] w-[1802px] bg-white pl-[419px] pt-[6px]">
          <DocTable />
        </div>
      </div>
      <StatusBar />
      <InsertTableMenu />
      <Gallery />
      <BuildingBlockDialog />
    </div>
  )
}
